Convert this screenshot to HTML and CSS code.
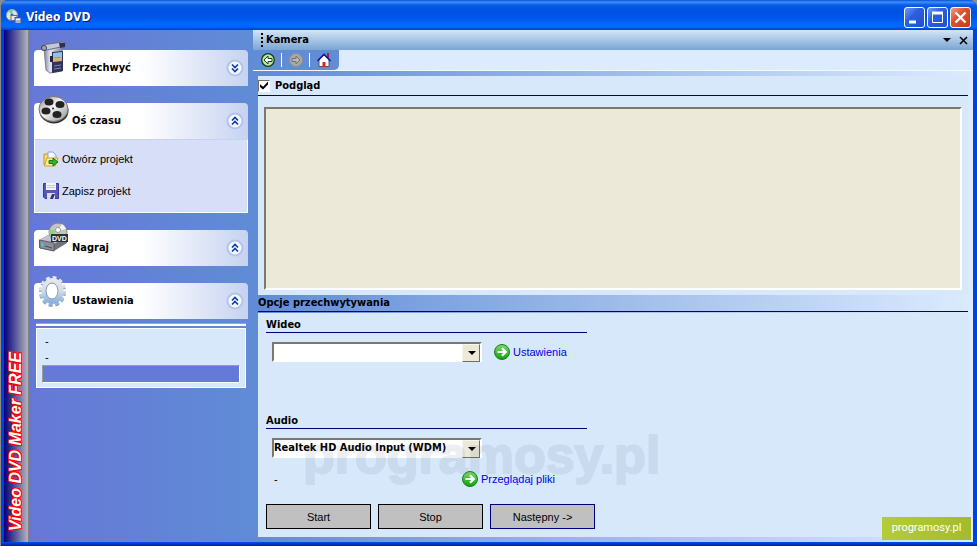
FILE: index.html
```html
<!DOCTYPE html>
<html lang="pl">
<head>
    <meta charset="UTF-8">
    <meta name="viewport" content="width=device-width, initial-scale=1.0">
    <title>Video DVD</title>
    <link rel="stylesheet" href="styles.css">
</head>
<body>
    <!-- shared symbols -->
    <svg class="symbols" width="0" height="0">
        <symbol id="chevron-up" viewBox="0 0 18 18">
            <circle cx="9" cy="9" r="7.5" fill="#f4f7fd" stroke="#b3c4ec" stroke-width="2"/>
            <path d="M6 8.5l3-3 3 3M6 12.5l3-3 3 3" fill="none" stroke="#0a3ca0" stroke-width="1.6"/>
        </symbol>
        <symbol id="chevron-down" viewBox="0 0 18 18">
            <circle cx="9" cy="9" r="7.5" fill="#f4f7fd" stroke="#b3c4ec" stroke-width="2"/>
            <path d="M6 5.5l3 3 3-3M6 9.5l3 3 3-3" fill="none" stroke="#0a3ca0" stroke-width="1.6"/>
        </symbol>
        <symbol id="go" viewBox="0 0 16 16">
            <circle cx="8" cy="8" r="7.5" fill="url(#green)" stroke="#148014"/>
            <path d="M3.5 8h8M8 4.2L11.8 8 8 11.8" fill="none" stroke="#fff" stroke-width="2.2"/>
        </symbol>
        <defs>
            <linearGradient id="green" x1="0" y1="0" x2="0" y2="1">
                <stop offset="0" stop-color="#7ed86a"/>
                <stop offset="1" stop-color="#12a010"/>
            </linearGradient>
            <linearGradient id="metal" x1="0" y1="0" x2="1" y2="0">
                <stop offset="0" stop-color="#7c8096"/>
                <stop offset="0.35" stop-color="#e4e8f4"/>
                <stop offset="1" stop-color="#868a9c"/>
            </linearGradient>
            <linearGradient id="reel" x1="0" y1="0" x2="1" y2="1">
                <stop offset="0" stop-color="#8c8c8c"/>
                <stop offset="0.45" stop-color="#f4f4f4"/>
                <stop offset="1" stop-color="#8a8a8a"/>
            </linearGradient>
            <linearGradient id="gear" x1="0" y1="0" x2="0" y2="1">
                <stop offset="0" stop-color="#e6e8ec"/>
                <stop offset="0.5" stop-color="#d0dcea"/>
                <stop offset="1" stop-color="#8db4dc"/>
            </linearGradient>
        </defs>
    </svg>

    <div class="window">
        <header class="titlebar">
            <svg class="app-icon" width="16" height="16" viewBox="0 0 16 16">
                <circle cx="6" cy="6" r="5.5" fill="#d8e4ec" stroke="#8fa6b8"/>
                <path d="M6 6L2 2a5.5 5.5 0 0 1 5-1.4z" fill="#7bd08a"/>
                <path d="M6 6l-5.4 1A5.5 5.5 0 0 0 3 10.5z" fill="#f2f28c"/>
                <circle cx="6" cy="6" r="1.5" fill="#3068c0"/>
                <rect x="5" y="6.5" width="6" height="5" fill="#e8e8f0" stroke="#666c88"/>
                <rect x="9" y="8.5" width="6" height="6" fill="#9fb4e4" stroke="#4a5690"/>
                <path d="M10 10.5h4" stroke="#fff"/>
            </svg>
            <h1>Video DVD</h1>
            <div class="window-buttons">
                <button type="button" aria-label="Minimalizuj">
                    <svg width="19" height="19" viewBox="0 0 19 19"><path d="M4 14h7" stroke="#fff" stroke-width="3"/></svg>
                </button>
                <button type="button" aria-label="Maksymalizuj">
                    <svg width="19" height="19" viewBox="0 0 19 19"><path d="M4.5 4v10.5h10V4" fill="none" stroke="#fff"/><path d="M4 5h11" stroke="#fff" stroke-width="3"/></svg>
                </button>
                <button type="button" class="close" aria-label="Zamknij">
                    <svg width="19" height="19" viewBox="0 0 19 19"><path d="M4.5 4.5l10 10M14.5 4.5l-10 10" stroke="#fff" stroke-width="2.4"/></svg>
                </button>
            </div>
        </header>

        <div class="client">
            <div class="brand"><span>Video DVD Maker FREE</span></div>

            <nav class="sidebar">
                <section class="group">
                    <button type="button" class="group-header">
                        <svg class="group-icon" width="32" height="34" viewBox="0 0 32 34">
                            <path d="M6 7l16-3 2 5v21l-12 2-4-3z" fill="url(#metal)" stroke="#7c8098"/>
                            <path d="M14 11l11-1v20l-11 2z" fill="#30345a"/>
                            <path d="M12 15h3v6h-3z" fill="#20243c"/>
                            <path d="M15 12l9-1v5l-9 1z" fill="#8ec4e6"/>
                            <path d="M15 17l9-1v4l-9 1z" fill="#d8b070"/>
                            <path d="M16 25l7-1M16 28l7-1" stroke="#8086b8"/>
                            <path d="M4 4l20-3 4 1-1 3-18 4H4z" fill="#c4c8d8" stroke="#6a6e88"/>
                            <circle cx="6" cy="7" r="2.5" fill="#a0a4b8" stroke="#3a3e58"/>
                            <path d="M21 2h6v4l-5 1z" fill="#2e3250"/>
                        </svg>
                        <span>Przechwyć</span>
                        <svg width="18" height="18"><use href="#chevron-down"/></svg>
                    </button>
                </section>

                <section class="group">
                    <button type="button" class="group-header">
                        <svg class="group-icon" width="32" height="34" viewBox="0 0 32 34">
                            <ellipse cx="16" cy="17" rx="14.5" ry="12.5" fill="#333"/>
                            <ellipse cx="15.5" cy="15" rx="14.5" ry="12.5" fill="url(#reel)" stroke="#777"/>
                            <ellipse cx="11" cy="8" rx="4.5" ry="3.5" fill="#222"/>
                            <ellipse cx="22" cy="10.5" rx="4.5" ry="3.5" fill="#222"/>
                            <ellipse cx="8" cy="17" rx="4.5" ry="3.5" fill="#222"/>
                            <ellipse cx="19" cy="20.5" rx="4.5" ry="3.5" fill="#222"/>
                            <circle cx="15" cy="14.5" r="1" fill="#222"/>
                        </svg>
                        <span>Oś czasu</span>
                        <svg width="18" height="18"><use href="#chevron-up"/></svg>
                    </button>
                    <div class="group-body">
                        <a href="#">
                            <svg width="16" height="16" viewBox="0 0 16 16">
                                <path d="M1 14V3h4l1 2h6v9z" fill="#f4dc6c" stroke="#c09a20"/>
                                <path d="M5 1h5l3 3v6H5z" fill="#f4f8ff" stroke="#88a4d8"/>
                                <path d="M1.5 15L4 7h11l-3 8z" fill="#fbec9c" stroke="#c8a430"/>
                                <path d="M6 9.5h4V7l5 4-5 4v-2.5H6z" fill="#38b028" stroke="#1c7c14"/>
                            </svg>
                            Otwórz projekt
                        </a>
                        <a href="#">
                            <svg width="16" height="16" viewBox="0 0 16 16">
                                <path d="M.5.5h15v15H2L.5 14z" fill="#5656c0" stroke="#38389c"/>
                                <path d="M3 0h10v7H3z" fill="#f4f4f6"/>
                                <path d="M4 2.5h8M4 4.5h8" stroke="#c8c8cc"/>
                                <path d="M4 10h8v6H4z" fill="#dcdce8"/>
                                <path d="M9 11h3l-2 5H7z" fill="#34347c"/>
                            </svg>
                            Zapisz projekt
                        </a>
                    </div>
                </section>

                <section class="group">
                    <button type="button" class="group-header">
                        <svg class="group-icon" width="32" height="34" viewBox="0 0 32 34">
                            <path d="M1 19l11-6 17 3v6l-13 8-15-3z" fill="#70727c"/>
                            <path d="M1 19l11-6 17 3-13 7z" fill="#c2c4cc"/>
                            <path d="M1.5 19l14.5 3v8L2 27z" fill="#8d8f9a" stroke="#5a5c66"/>
                            <path d="M4 22v3" stroke="#40c8f0" stroke-width="2"/>
                            <path d="M7 25l7 2" stroke="#484a54"/>
                            <circle cx="20" cy="11" r="9" fill="#c4c4c4" stroke="#888"/>
                            <path d="M20 10l-8.5-1a9 9 0 0 0 0 5z" fill="#8ad860"/>
                            <path d="M20 10l4-7a9 9 0 0 1 4 5z" fill="#f4f4f4"/>
                            <circle cx="20" cy="9" r="2.5" fill="#fff" stroke="#999"/>
                            <rect x="13" y="13" width="17" height="8" fill="#303030"/>
                            <text x="14" y="20" class="disc-label">DVD</text>
                        </svg>
                        <span>Nagraj</span>
                        <svg width="18" height="18"><use href="#chevron-up"/></svg>
                    </button>
                </section>

                <section class="group">
                    <button type="button" class="group-header">
                        <svg class="group-icon" width="32" height="34" viewBox="0 0 32 34">
                            <ellipse cx="14.5" cy="18" rx="11.5" ry="13" fill="none" stroke="#7f9cbc" stroke-width="4" stroke-dasharray="3.5 2.9"/>
                            <ellipse cx="14.5" cy="17" rx="11.5" ry="13" fill="none" stroke="url(#gear)" stroke-width="4" stroke-dasharray="3.5 2.9"/>
                            <ellipse cx="14.5" cy="17" rx="8.5" ry="10.5" fill="none" stroke="url(#gear)" stroke-width="5"/>
                            <ellipse cx="14" cy="17" rx="6" ry="8" fill="#fff" stroke="#7f94ac"/>
                        </svg>
                        <span>Ustawienia</span>
                        <svg width="18" height="18"><use href="#chevron-up"/></svg>
                    </button>
                </section>

                <div class="status">
                    <p>-</p>
                    <p>-</p>
                    <div class="status-bar"></div>
                </div>
            </nav>

            <main class="content">
                <div class="pane-header">
                    <span class="grip"></span>
                    <h2>Kamera</h2>
                    <button type="button" aria-label="Menu">
                        <svg width="9" height="9" viewBox="0 0 9 9"><path d="M0 2h8L4 6z"/></svg>
                    </button>
                    <button type="button" aria-label="Zamknij panel">
                        <svg width="9" height="9" viewBox="0 0 9 9"><path d="M1 1l7 7M8 1L1 8" stroke="#000" stroke-width="1.6"/></svg>
                    </button>
                </div>

                <div class="toolbar">
                    <div class="toolbar-tab">
                        <button type="button" aria-label="Wstecz">
                            <svg width="14" height="14" viewBox="0 0 14 14"><circle cx="7" cy="7" r="6.3" fill="#b8e89c" stroke="#183818" stroke-width="1.3"/><path d="M7 3v2.5h4v3H7V11L3 7z" fill="#fff" stroke="#204020"/></svg>
                        </button>
                        <button type="button" aria-label="Dalej" disabled>
                            <svg width="14" height="14" viewBox="0 0 14 14"><circle cx="7" cy="7" r="6.5" fill="#a8a8a8" stroke="#909090"/><path d="M7 3v2.5H3v3h4V11l4-4z" fill="#b8b8b8" stroke="#747474"/></svg>
                        </button>
                        <button type="button" aria-label="Start">
                            <svg width="14" height="14" viewBox="0 0 14 14"><path d="M10 0h2v5h-2z" fill="#8c2c2c"/><path d="M2 7l5-5 5 5v6.5H2z" fill="#fff" stroke="#555"/><path d="M.5 8L7 1.5 13.5 8" fill="none" stroke="#1818a0" stroke-width="1.6"/><path d="M5.5 9h3v5h-3z" fill="#e02020"/></svg>
                        </button>
                    </div>
                </div>

                <div class="panel preview-panel">
                    <label class="section-title">
                        <input type="checkbox" checked>
                        Podgląd
                    </label>
                    <div class="preview"></div>
                </div>

                <h3 class="section-title options-title">Opcje przechwytywania</h3>

                <form class="panel options">
                    <section class="device">
                        <label class="device-title" for="video">Wideo</label>
                        <div class="device-row">
                            <span class="combo">
                                <select id="video"><option></option></select>
                            </span>
                            <a href="#"><svg width="16" height="16"><use href="#go"/></svg>Ustawienia</a>
                        </div>
                    </section>

                    <section class="device">
                        <label class="device-title" for="audio">Audio</label>
                        <div class="device-row">
                            <span class="combo">
                                <select id="audio"><option>Realtek HD Audio Input (WDM)</option></select>
                            </span>
                        </div>
                        <div class="file-row">
                            <span class="file-name">-</span>
                            <a href="#"><svg width="16" height="16"><use href="#go"/></svg>Przeglądaj pliki</a>
                        </div>
                    </section>

                    <div class="actions">
                        <button type="button">Start</button>
                        <button type="button">Stop</button>
                        <button type="button" class="next">Następny -&gt;</button>
                    </div>
                    <div class="watermark">programosy.pl</div>
                </form>
            </main>
        </div>
        <div class="badge">programosy.pl</div>
    </div>
</body>
</html>
```

FILE: styles.css
```css
* {
    box-sizing: border-box;
}
body {
    margin: 0;
    background: #8c8c8c;
    font: 11px/14px "Liberation Sans", Arial, sans-serif;
    color: #000;
}
h1, h2, h3, p {
    margin: 0;
}
button {
    padding: 0;
    border: none;
    background: none;
    font: inherit;
    color: inherit;
}
svg {
    display: block;
    flex: none;
}
a {
    display: flex;
    align-items: center;
    gap: 3px;
    color: #0000e6;
    text-decoration: none;
}
.symbols {
    position: absolute;
}
.window {
    position: relative;
    display: flex;
    flex-direction: column;
    min-height: 100vh;
    border-radius: 8px 8px 0 0;
    overflow: hidden;
    background: #0040dc;
    border-left: 1px solid #8c8c84;
}

/* title bar */
.titlebar {
    display: flex;
    align-items: center;
    gap: 4px;
    height: 30px;
    padding: 4px 6px 0 5px;
    background: linear-gradient(#0a50d0 0, #3c92fc 2px, #0a5ce8 5px, #0052e2 10px, #0056ea 18px, #0068ff 24px, #0066fc 27px, #0040c4 30px);
}
.titlebar h1 {
    flex: 1;
    color: #fff;
    font: bold 12px/16px "DejaVu Sans Condensed", "DejaVu Sans", sans-serif;
    text-shadow: 1px 1px 0 #0a1883;
}
.window-buttons {
    display: flex;
    gap: 2px;
}
.window-buttons button {
    width: 21px;
    height: 21px;
    border: 1px solid #fff;
    border-radius: 3px;
    background: linear-gradient(135deg, #6f9cf6, #2c5fe0 40%, #1f50cc);
}
.window-buttons .close {
    background: linear-gradient(135deg, #f0a088, #e0502c 40%, #c83c14);
}

.client {
    flex: 1;
    display: flex;
    margin: 0 4px 0 3px;
    background: linear-gradient(90deg, #6678d6 24px, #608cd6 254px, #dcebfe);
}
.window::after {
    content: "";
    height: 4px;
    background: linear-gradient(#0050f0, #001c9c);
}

/* vertical product name */
.brand {
    width: 25px;
    padding: 0 0 11px;
    display: flex;
    justify-content: center;
    align-items: flex-end;
    background: linear-gradient(90deg, #00007c, #b4b4bc);
    border-right: 1px solid #808080;
}
.brand span {
    writing-mode: vertical-rl;
    transform: rotate(180deg);
    font: italic bold 16px/20px "Liberation Sans", Arial, sans-serif;
    color: #fff;
    white-space: nowrap;
    text-shadow: 1px 0 #f00, -1px 0 #f00, 0 1px #f00, 0 -1px #f00, 1px 1px #f00, -1px -1px #f00, 1px -1px #f00, -1px 1px #f00;
}

/* sidebar */
.sidebar {
    flex: none;
    width: 224px;
    padding: 20px 5px 0;
}
.group {
    margin-bottom: 17px;
}
.group:last-of-type {
    margin-bottom: 4px;
}
.group-header {
    position: relative;
    display: flex;
    align-items: center;
    width: 100%;
    height: 36px;
    padding: 0 4px 0 38px;
    border-radius: 4px 4px 0 0;
    background: linear-gradient(90deg, #fff 50%, #c6d3f0);
    font: bold 11px/14px "DejaVu Sans Condensed", "DejaVu Sans", sans-serif;
}
.group-header span {
    flex: 1;
    text-align: left;
}
.group-icon {
    position: absolute;
    left: 4px;
    top: -9px;
}
.disc-label {
    fill: #fff;
    font: bold 7px "Liberation Sans", Arial, sans-serif;
}
.group-body {
    display: flex;
    flex-direction: column;
    gap: 16px;
    padding: 11px 8px 13px;
    border: 1px solid #fff;
    border-top-color: #c6d3f0;
    background: #d6dff7;
}
.group-body a {
    color: #000;
}
.status {
    position: relative;
    margin: 9px 2px 0;
    padding: 4px 5px;
    border: 1px solid #fff;
    background: #d8e8fb;
}
.status::before {
    content: "";
    position: absolute;
    left: -1px;
    right: -1px;
    top: -6px;
    height: 2px;
    border-top: 1px solid #aca899;
    background: #fff;
}
.status p {
    padding-left: 3px;
    line-height: 16px;
}
.status-bar {
    height: 18px;
    border: 1px solid;
    border-color: #9d9d94 #fff #fff #9d9d94;
    background: #6579d8;
}

/* content */
.content {
    flex: 1;
    display: flex;
    flex-direction: column;
}
.pane-header {
    display: flex;
    align-items: center;
    height: 20px;
    padding: 0 5px 0 8px;
    background: linear-gradient(#d4e6f6, #7ba5d4);
}
.pane-header h2 {
    flex: 1;
    padding-left: 3px;
    font: bold 11px/14px "DejaVu Sans Condensed", "DejaVu Sans", sans-serif;
}
.pane-header button {
    margin-left: 7px;
}
.grip {
    width: 2px;
    height: 14px;
    background: repeating-linear-gradient(#000 0, #000 2px, transparent 2px, transparent 4px);
}
.toolbar {
    height: 21px;
    background: #ddebff;
    border-bottom: 1px solid #f4f9ff;
}
.toolbar-tab {
    display: flex;
    align-items: center;
    width: 86px;
    height: 20px;
    padding-left: 1px;
    background: #628cd6;
    border-radius: 0 0 5px 0;
}
.toolbar-tab button {
    padding: 0 6px 0 7px;
    height: 14px;
}
.toolbar-tab button + button {
    border-left: 1px solid #fff;
}
.panel {
    margin: 0 5px;
    background: #d8e8fb;
}
.preview-panel {
    margin-top: 5px;
    flex: 1;
    display: flex;
    flex-direction: column;
}
.section-title {
    border-bottom: 1px solid #000080;
    font: bold 11px/16px "DejaVu Sans Condensed", "DejaVu Sans", sans-serif;
}
label.section-title {
    display: flex;
    align-items: center;
    height: 20px;
    gap: 5px;
}
input[type="checkbox"] {
    appearance: none;
    width: 12px;
    height: 12px;
    margin: 0;
    border: 1px solid;
    border-color: #716f64 #fff #fff #716f64;
    background: #fff;
    display: flex;
}
input[type="checkbox"]:checked::before {
    content: "";
    width: 8px;
    height: 8px;
    margin: 1px;
    background: #000;
    clip-path: polygon(0 35%, 38% 65%, 100% 0, 100% 38%, 38% 100%, 0 70%);
}
.preview {
    flex: 1;
    min-height: 180px;
    margin: 11px 6px 5px;
    border: 2px solid;
    border-color: #7c786c #fff #fff #7c786c;
    background: #ece9d8;
}
.options-title {
    margin: 0 5px;
}
.options {
    position: relative;
    margin: 1px 5px 5px;
    padding: 4px 8px 8px;
}
.device {
    width: 321px;
    height: 96px;
}
.device + .device {
    height: 91px;
}
.device-title {
    display: block;
    height: 16px;
    border-bottom: 1px solid #000080;
    font: bold 11px/16px "DejaVu Sans Condensed", "DejaVu Sans", sans-serif;
}
.device-row {
    display: flex;
    align-items: center;
    gap: 12px;
    padding: 9px 0 0 6px;
}
.combo {
    position: relative;
    width: 210px;
    height: 20px;
}
.combo select {
    appearance: none;
    width: 100%;
    height: 100%;
    padding: 0 18px 0 0;
    border: 2px solid;
    border-color: #7c786c #fff #fff #7c786c;
    border-radius: 0;
    background: #fff;
    color: #000;
    font: bold 11px/14px "DejaVu Sans Condensed", "DejaVu Sans", sans-serif;
}
.combo::before {
    content: "";
    position: absolute;
    right: 2px;
    top: 2px;
    width: 16px;
    height: 16px;
    border: 1px solid;
    border-color: #f8f6ee #716f64 #716f64 #f8f6ee;
    background: #ece9d8;
    pointer-events: none;
}
.combo::after {
    content: "";
    position: absolute;
    right: 6px;
    top: 9px;
    border: 4px solid transparent;
    border-top-color: #000;
    border-bottom: none;
    pointer-events: none;
}
.file-row {
    display: flex;
    align-items: center;
    padding: 13px 0 0 8px;
}
.file-name {
    width: 188px;
}
.actions {
    display: flex;
    gap: 7px;
}
.actions button {
    width: 105px;
    height: 25px;
    border: 1px solid #000;
    background: #c0c0c0;
}
.actions .next {
    border-color: #000080;
}
.watermark {
    position: absolute;
    left: 45px;
    top: 112px;
    font: bold 52px/60px "Liberation Sans", Arial, sans-serif;
    color: #506482;
    -webkit-text-stroke: 2px #506482;
    opacity: 0.1;
    pointer-events: none;
}
.badge {
    position: absolute;
    right: 6px;
    bottom: 6px;
    width: 89px;
    height: 23px;
    background: linear-gradient(90deg, #b4cc38, #a4bc2c);
    color: #fff;
    font: 11px/22px Roboto, "Liberation Sans", sans-serif;
    text-align: center;
}
```
